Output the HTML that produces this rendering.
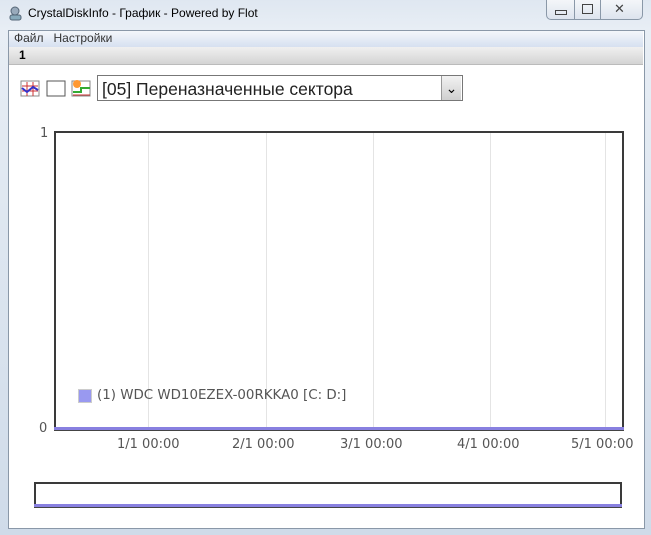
<!DOCTYPE html>
<html><head><meta charset="utf-8"><style>
body{margin:0;width:651px;height:535px;overflow:hidden;background:#c9d6e6;font-family:"Liberation Sans","Noto Sans CJK SC",sans-serif;position:relative}
.frame{position:absolute;left:0;top:0;width:651px;height:535px;background:linear-gradient(180deg,#dfe7f1 0,#e8eef5 30px,#cfdbe9 100%)}
.abs{position:absolute}
.title{left:28px;top:6px;font-size:12px;color:#000}
.client{left:8px;top:30px;width:635px;height:497px;background:#fff;border:1px solid #8a98a8}
.menu{left:9px;top:31px;width:634px;height:16px;background:linear-gradient(#f4f7fb,#d6e0f0);font-size:12px;color:#333}
.tb{left:9px;top:47px;width:634px;height:17px;background:linear-gradient(#f0f0f0,#d4d4d4);font-size:12px;font-weight:bold;border-bottom:1px solid #bbb}
.sel{left:97px;top:75px;height:26px;border:1px solid #777;background:#fff;font-size:17.5px;color:#222;line-height:26px;box-sizing:border-box;width:366px;padding-left:4px}
.grid{width:1px;background:#e4e4e4;top:133px;height:296px}
.ch{font-family:"DejaVu Sans",sans-serif;font-size:13px;color:#555}
.xl{top:437px}
</style></head><body>
<div class="frame"></div>
<svg class="abs" style="left:8px;top:5px" width="16" height="16"><circle cx="7" cy="6" r="4" fill="#9ab" stroke="#567"/><rect x="2" y="10" width="11" height="5" rx="2" fill="#8ab" stroke="#567"/></svg>
<div class="abs title">CrystalDiskInfo - График - Powered by Flot</div>
<div class="abs" style="left:546px;top:0;width:95px;height:19px;border:1px solid #8a98a8;border-top:none;border-radius:0 0 5px 5px;background:linear-gradient(#f4f6f9,#dde4ee)"></div>
<div class="abs" style="left:574px;top:0;width:1px;height:19px;background:#8a98a8"></div>
<div class="abs" style="left:600px;top:0;width:1px;height:19px;background:#8a98a8"></div>
<div class="abs" style="left:555px;top:10px;width:10px;height:3px;border:1px solid #444"></div>
<div class="abs" style="left:582px;top:4px;width:9px;height:8px;border:1px solid #444"></div>
<div class="abs" style="left:614px;top:1px;font-size:13px;color:#444">✕</div>
<div class="abs client"></div>
<div class="abs menu"><span style="margin-left:5px">Файл</span><span style="margin-left:10px">Настройки</span></div>
<div class="abs tb"><span style="margin-left:10px;line-height:17px">1</span></div>
<svg class="abs" style="left:20px;top:80px" width="72" height="18">
<rect x="1" y="1" width="18" height="15" fill="#fff" stroke="#888"/><path d="M2 6h16M2 11h16M7 2v14M13 2v14" stroke="#c33"/><path d="M2 8l5 4 6-5 5 3" stroke="#33c" fill="none" stroke-width="2"/>
<rect x="27" y="1" width="18" height="15" fill="#fff" stroke="#555"/>
<rect x="52" y="1" width="18" height="15" fill="#fff" stroke="#888"/><circle cx="57" cy="4" r="4" fill="#f93"/><path d="M53 12h8v-4h9" stroke="#3a3" fill="none" stroke-width="2"/><path d="M53 15h17" stroke="#c33"/>
</svg>
<div class="abs sel">[05] Переназначенные сектора</div>
<div class="abs" style="left:441px;top:76px;width:19px;height:24px;background:linear-gradient(#f2f2f2,#cfcfcf);border-left:1px solid #999;text-align:center;font-size:14px;line-height:24px">⌄</div>
<div class="abs ch" style="left:40px;top:126px">1</div>
<div class="abs ch" style="left:39px;top:421px">0</div>
<div class="abs" style="left:54px;top:131px;width:566px;height:296px;border:2px solid #3a3a3a;border-bottom:none"></div>
<div class="abs grid" style="left:148px"></div><div class="abs grid" style="left:266px"></div><div class="abs grid" style="left:373px"></div><div class="abs grid" style="left:490px"></div><div class="abs grid" style="left:605px"></div>
<div class="abs" style="left:54px;top:427px;width:570px;height:3px;background:#8880e0;border-bottom:1px solid #444"></div>
<div class="abs" style="left:78px;top:389px;width:14px;height:14px;background:#9999f0;border:1px solid #ccc;box-sizing:border-box"></div>
<div class="abs ch" style="left:97px;top:388px;font-size:13.4px">(1) WDC WD10EZEX-00RKKA0 [C: D:]</div>
<div class="abs ch xl" style="left:117px">1/1 00:00</div><div class="abs ch xl" style="left:232px">2/1 00:00</div><div class="abs ch xl" style="left:340px">3/1 00:00</div><div class="abs ch xl" style="left:457px">4/1 00:00</div><div class="abs ch xl" style="left:571px">5/1 00:00</div>
<div class="abs" style="left:34px;top:482px;width:584px;height:22px;border:2px solid #3a3a3a;border-bottom:none"></div>
<div class="abs" style="left:34px;top:504px;width:588px;height:3px;background:#8880e0;border-bottom:1px solid #444"></div>
</body></html>
